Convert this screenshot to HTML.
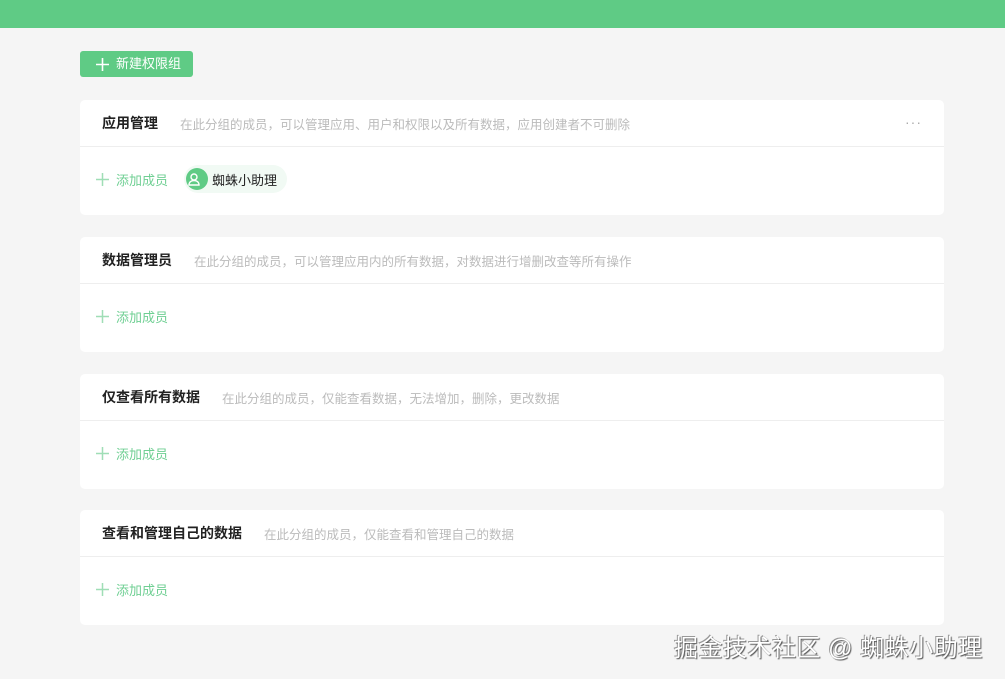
<!DOCTYPE html>
<html><head><meta charset="utf-8"><style>
body{margin:0;width:1005px;height:679px;background:#f5f5f5;font-family:"Liberation Sans","Noto Sans CJK SC",sans-serif;position:relative;overflow:hidden}
.top{height:28px;background:#5fcb85}
.btn{position:absolute;left:80px;top:51px;width:113px;height:26px;background:#5fcb85;border-radius:3px;color:#fff;font-size:13px;line-height:26px;box-sizing:border-box;padding-left:16px;display:flex;align-items:center}
.btn svg{margin-right:7px}
.card{position:absolute;left:80px;width:864px;height:115px;background:#fff;border-radius:5px}
.hd{height:46px;border-bottom:1px solid #eee;display:flex;align-items:center;padding-left:22px;font-size:14px}
.hd .t{font-weight:bold;color:#222;margin-right:22px}
.hd .d{color:#bbb;font-size:12.5px}
.bd{height:64px;display:flex;align-items:center;padding-left:16px;color:#6fcf93;font-size:13px}
.bd svg{margin-right:7px}
.chip{margin-left:16px;height:28px;border-radius:14px;background:#f1faf4;display:flex;align-items:center;padding:0 10px 0 2px;color:#222}
.av{width:22px;height:22px;border-radius:50%;background:#5fcb85;margin-right:4px;display:flex;align-items:center;justify-content:center}
.dots{position:absolute;right:22px;top:14px;color:#aaa;font-size:14px;letter-spacing:1px}
.wm{position:absolute;left:674px;top:628px;font-size:24px;letter-spacing:0.5px;color:#fff;text-shadow:1px 1px 1px #555,-1px -1px 0 #999}
</style></head><body>
<div class="top"></div>
<div class="btn"><svg width="13" height="13" viewBox="0 0 13 13" stroke="#fff" stroke-width="1.6"><path d="M6.5 0v13M0 6.5h13"/></svg>新建权限组</div>
<div class="card" style="top:100px"><div class="hd"><span class="t">应用管理</span><span class="d">在此分组的成员，可以管理应用、用户和权限以及所有数据，应用创建者不可删除</span></div><div class="dots">···</div>
<div class="bd"><svg width="13" height="13" viewBox="0 0 13 13" stroke="#9fdeb6" stroke-width="1.5"><path d="M6.5 0v13M0 6.5h13"/></svg>添加成员<div class="chip"><div class="av"><svg width="14" height="14" viewBox="0 0 14 14" fill="none" stroke="#fff" stroke-width="1.4"><circle cx="7" cy="5" r="3"/><path d="M2 13c0-3 2.2-4.5 5-4.5s5 1.5 5 4.5z"/></svg></div>蜘蛛小助理</div></div></div>
<div class="card" style="top:237px"><div class="hd"><span class="t">数据管理员</span><span class="d">在此分组的成员，可以管理应用内的所有数据，对数据进行增删改查等所有操作</span></div><div class="bd"><svg width="13" height="13" viewBox="0 0 13 13" stroke="#9fdeb6" stroke-width="1.5"><path d="M6.5 0v13M0 6.5h13"/></svg>添加成员</div></div>
<div class="card" style="top:374px"><div class="hd"><span class="t">仅查看所有数据</span><span class="d">在此分组的成员，仅能查看数据，无法增加，删除，更改数据</span></div><div class="bd"><svg width="13" height="13" viewBox="0 0 13 13" stroke="#9fdeb6" stroke-width="1.5"><path d="M6.5 0v13M0 6.5h13"/></svg>添加成员</div></div>
<div class="card" style="top:510px"><div class="hd"><span class="t">查看和管理自己的数据</span><span class="d">在此分组的成员，仅能查看和管理自己的数据</span></div><div class="bd"><svg width="13" height="13" viewBox="0 0 13 13" stroke="#9fdeb6" stroke-width="1.5"><path d="M6.5 0v13M0 6.5h13"/></svg>添加成员</div></div>
<div class="wm">掘金技术社区 @ 蜘蛛小助理</div>
</body></html>
